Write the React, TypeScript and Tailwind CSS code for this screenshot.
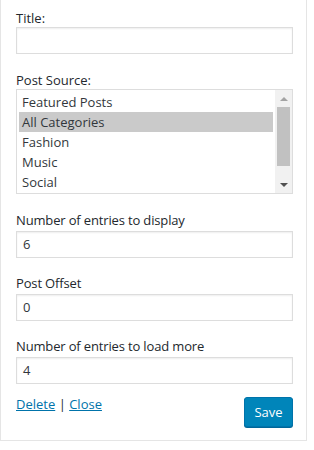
import React from "react";

const font = { fontFamily: '"Open Sans", "Noto Sans", sans-serif' };

function Field({ label, value, mt }: { label: string; value: string; mt: string }) {
  return (
    <div className={mt}>
      <div className="text-[13px] leading-[17px] tracking-[-0.15px] text-[#23282d]">{label}</div>
      <div className="mt-[2px] h-[27px] w-[277px] border border-[#dddddd] bg-white shadow-[inset_0_1px_2px_rgba(0,0,0,0.07)] pl-[6px] text-[13px] leading-[25px] text-[#32373c]">
        {value}
      </div>
    </div>
  );
}

export default function App() {
  const items = ["Featured Posts", "All Categories", "Fashion", "Music", "Social"];
  return (
    <div className="w-[314px] h-[450px] bg-white" style={font}>
      <div className="w-[307px] border-l border-r border-b border-[#e5e5e5] pl-[15px] pr-[13px] pt-[10px] pb-[13px]">
        <div className="text-[13px] leading-[17px] text-[#23282d]">Title:</div>
        <div className="h-[27px] w-[277px] border border-[#dddddd] bg-white shadow-[inset_0_1px_2px_rgba(0,0,0,0.07)]" />

        <div className="mt-[18px] text-[13px] leading-[17px] text-[#23282d]">Post Source:</div>
        <div className="flex h-[105px] w-[277px] border border-[#dddddd] bg-white">
          <div className="flex-1 pl-[2px] pt-[2px]">
            {items.map((it, i) => (
              <div
                key={it}
                className={`h-[20px] pl-[3px] text-[13px] leading-[20px] text-[#32373c] ${i === 1 ? "bg-[#cacaca]" : ""}`}
              >
                {it}
              </div>
            ))}
          </div>
          <div className="ml-[2px] flex w-[17px] flex-col items-center bg-[#f1f1f1]">
            <div className="flex h-[17px] w-full items-center justify-center">
              <div className="h-0 w-0 border-x-[4px] border-b-[4px] border-x-transparent border-b-[#a3a3a3]" />
            </div>
            <div className="h-[59px] w-[13px] bg-[#c1c1c1]" />
            <div className="flex-1" />
            <div className="flex h-[17px] w-full items-center justify-center">
              <div className="h-0 w-0 border-x-[4px] border-t-[4px] border-x-transparent border-t-[#505050]" />
            </div>
          </div>
        </div>

        <Field label="Number of entries to display" value="6" mt="mt-[18px]" />
        <Field label="Post Offset" value="0" mt="mt-[17px]" />
        <Field label="Number of entries to load more" value="4" mt="mt-[17px]" />

        <div className="mt-[12px] flex items-start justify-between">
          <div className="text-[13px] leading-[17px] text-[#0073aa]">
            <span className="underline">Delete</span>
            <span className="text-[#23282d]"> | </span>
            <span className="underline">Close</span>
          </div>
          <button className="h-[30px] w-[49px] rounded-[3px] border border-[#0073aa] bg-[#0085ba] text-[13px] leading-[26px] text-white shadow-[0_1px_0_#006799] mt-[1px]">
            Save
          </button>
        </div>
      </div>
    </div>
  );
}
